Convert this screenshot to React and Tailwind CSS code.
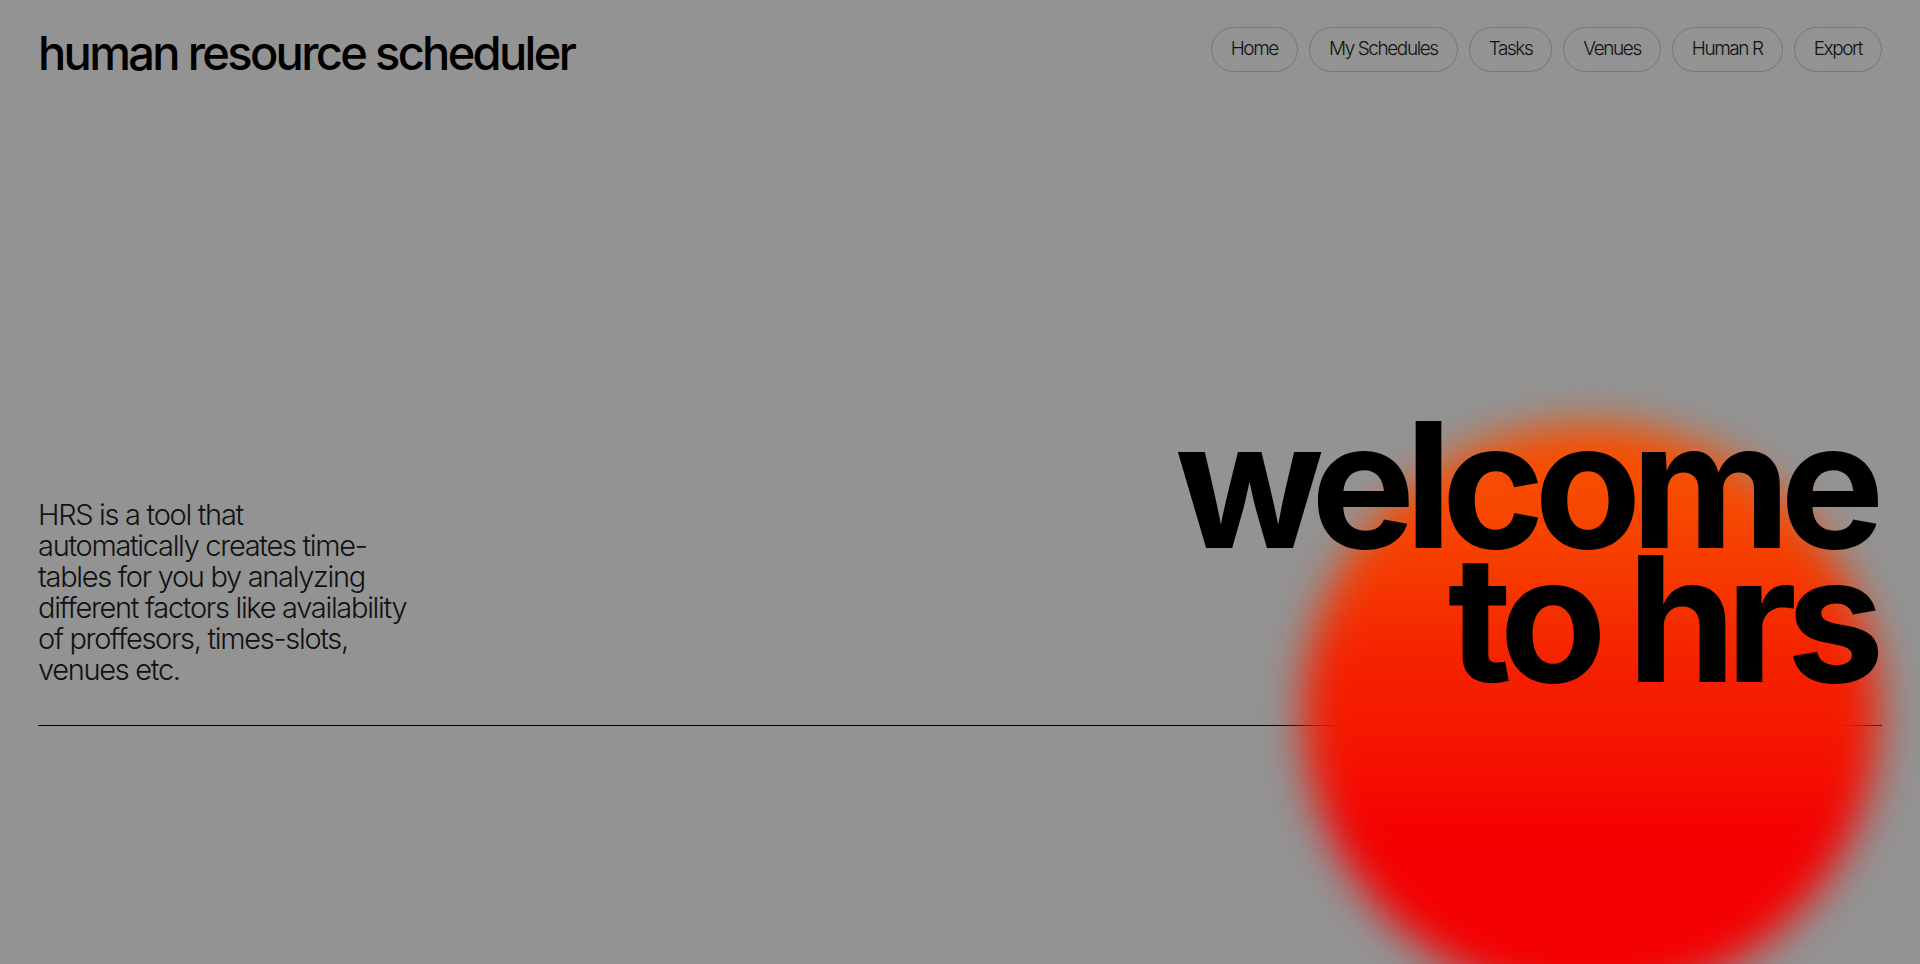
const links = ['Home', 'My Schedules', 'Tasks', 'Venues', 'Human R', 'Export'];

const NavPill = ({ label }) => (
  <a href="#" className="flex h-[45px] items-center rounded-full border border-[#767676] px-[19px] text-[19px] font-light tracking-[-0.075em] text-[#111]">
    {label}
  </a>
);

export default function App() {
  return (
    <div className="relative h-[964px] w-full overflow-hidden bg-[#939393] px-[38px] font-['Inter','Noto_Sans',sans-serif] text-black">
      {/* glow */}
      <div className="absolute left-[1303px] top-[424px] h-[576px] w-[576px] rounded-full bg-linear-to-b from-[#f74d00] from-10% via-[#f52200] via-40% to-[#f50000] to-70% blur-[20px]" />

      {/* Header */}
      <header className="relative z-10 flex items-start justify-between pt-[27px]">
        <h1 className="mt-[2px] text-[47px] font-medium leading-none tracking-[-0.057em]">human resource scheduler</h1>
        <nav className="flex items-center gap-[11px]">
          {links.map(l => <NavPill key={l} label={l} />)}
        </nav>
      </header>

      {/* Hero */}
      <section className="mt-[341px] flex items-end justify-between pb-[40px]">
        <p className="text-[29px] font-light leading-[31px] tracking-[-0.045em] text-[#111]">
          HRS is a tool that<br />
          automatically creates time-<br />
          tables for you by analyzing<br />
          different factors like availability<br />
          of proffesors, times-slots,<br />
          venues etc.
        </p>
        <h2 className="relative z-10 mr-[8px] text-right text-[175px] font-bold leading-[134px] tracking-[-0.06em]">
          welcome<br />to hrs
        </h2>
      </section>
      <div className="h-px bg-black" />
    </div>
  );
}
